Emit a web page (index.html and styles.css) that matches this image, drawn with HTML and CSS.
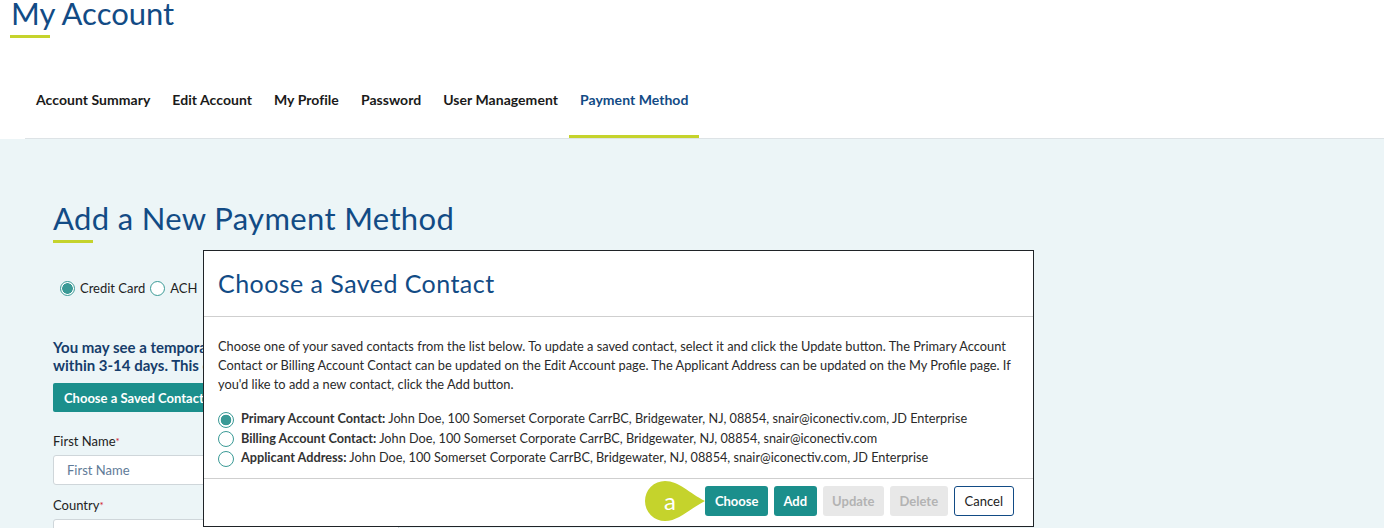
FILE: index.html
```html
<!DOCTYPE html>
<html lang="en">
<head>
  <meta charset="UTF-8">
  <title>My Account - Payment Method</title>
  <link rel="stylesheet" href="styles.css">
</head>
<body>
  <header class="top">
    <h1 class="page-title">My Account</h1>
    <nav class="tabs">
      <a class="tab" href="#">Account Summary</a>
      <a class="tab" href="#">Edit Account</a>
      <a class="tab" href="#">My Profile</a>
      <a class="tab" href="#">Password</a>
      <a class="tab" href="#">User Management</a>
      <a class="tab active" href="#">Payment Method</a>
    </nav>
  </header>

  <main class="content">
    <h2 class="section-title">Add a New Payment Method</h2>

    <div class="pay-type">
      <label class="opt"><span class="radio on"></span>Credit Card</label>
      <label class="opt"><span class="radio"></span>ACH</label>
    </div>

    <p class="notice">
      <span>You may see a temporary authorization charge on your card</span>
      <span>within 3-14 days. This charge will be removed</span>
    </p>

    <button class="btn btn-teal saved-btn">Choose a Saved Contact</button>

    <div class="field">
      <label class="field-label">First Name<span class="req">*</span></label>
      <input class="input" type="text" placeholder="First Name">
    </div>
    <div class="field">
      <label class="field-label">Country<span class="req">*</span></label>
      <input class="input" type="text">
    </div>
  </main>

  <div class="modal">
    <div class="modal-head">
      <h3 class="modal-title">Choose a Saved Contact</h3>
    </div>
    <div class="modal-body">
      <p class="modal-text">Choose one of your saved contacts from the list below. To update a saved contact, select it and click the Update button. The Primary Account Contact or Billing Account Contact can be updated on the Edit Account page. The Applicant Address can be updated on the My Profile page. If you'd like to add a new contact, click the Add button.</p>
      <ul class="contacts">
        <li><span class="radio big on"></span><span><b>Primary Account Contact:</b> John Doe, 100 Somerset Corporate CarrBC, Bridgewater, NJ, 08854, snair@iconectiv.com, JD Enterprise</span></li>
        <li><span class="radio big"></span><span><b>Billing Account Contact:</b> John Doe, 100 Somerset Corporate CarrBC, Bridgewater, NJ, 08854, snair@iconectiv.com</span></li>
        <li><span class="radio big"></span><span><b>Applicant Address:</b> John Doe, 100 Somerset Corporate CarrBC, Bridgewater, NJ, 08854, snair@iconectiv.com, JD Enterprise</span></li>
      </ul>
    </div>
    <div class="modal-foot">
      <span class="badge">
        <svg width="60" height="40" viewBox="0 0 60 40"><path d="M20 0 C34 0 44 12 60 20 C44 28 34 40 20 40 A20 20 0 0 1 20 0 Z" fill="#c5d32c"/></svg>
        <span class="badge-letter">a</span>
      </span>
      <button class="btn btn-teal">Choose</button>
      <button class="btn btn-teal">Add</button>
      <button class="btn btn-off">Update</button>
      <button class="btn btn-off">Delete</button>
      <button class="btn btn-line">Cancel</button>
    </div>
  </div>
</body>
</html>
```

FILE: styles.css
```css
body {
  margin: 0;
  font-family: Lato, "Open Sans", sans-serif;
  color: #222;
  height: 100vh;
  overflow: hidden;
  background: #ecf5f7;
}
.top {
  background: #fff;
}
.page-title {
  margin: 0;
  padding-left: 11px;
  font-size: 31px;
  font-weight: 400;
  line-height: 27px;
  color: #124b85;
}
.page-title::after {
  content: "";
  display: block;
  width: 40px;
  height: 3px;
  margin: 8px 0 0 -1px;
  background: #c5d32c;
}
.tabs {
  display: flex;
  margin: 24px 0 0 25px;
  border-bottom: 1px solid #dde3e6;
}
.tab {
  padding: 28px 11px 25px;
  border-bottom: 3px solid transparent;
  font-size: 14px;
  font-weight: 700;
  line-height: 20px;
  letter-spacing: 0.04px;
  color: #1a1a1a;
  text-decoration: none;
}
.tab.active {
  color: #124b85;
  border-bottom-color: #c5d32c;
}
.content {
  padding: 66px 0 0 53px;
}
.section-title {
  margin: 0;
  font-size: 31px;
  font-weight: 400;
  line-height: 27px;
  letter-spacing: 0.35px;
  color: #124b85;
}
.section-title::after {
  content: "";
  display: block;
  width: 40px;
  height: 3px;
  margin-top: 8px;
  background: #c5d32c;
}
.pay-type {
  display: flex;
  gap: 5px;
  margin: 36px 0 0 7px;
}
.opt {
  display: flex;
  align-items: center;
  gap: 5px;
  font-size: 13px;
  color: #222;
}
.radio {
  display: inline-block;
  flex: none;
  width: 13px;
  height: 13px;
  border: 1px solid #3a9a96;
  border-radius: 50%;
  background: #fff;
  margin-top: 2px;
}
.radio.on {
  background: radial-gradient(circle, #3a9a96 0 5px, #fff 5.6px);
}
.radio.big {
  width: 14px;
  height: 14px;
}
.notice {
  margin: 42px 0 0;
  font-size: 15px;
  font-weight: 700;
  line-height: 18px;
  color: #163d6b;
}
.notice span {
  display: block;
  white-space: nowrap;
}
.btn {
  font-family: Lato, "Open Sans", sans-serif;
  font-size: 13px;
  height: 30px;
  padding: 0 8.5px;
  border: 1px solid transparent;
  border-radius: 3px;
  cursor: pointer;
}
.btn-teal {
  background: #1b8f8c;
  color: #fff;
  font-weight: 700;
}
.btn-off {
  background: #e8e8e8;
  color: #b3b3b3;
  font-weight: 700;
}
.btn-line {
  padding: 0 10px;
  background: #fff;
  border-color: #124b85;
  color: #222;
}
.saved-btn {
  margin-top: 9px;
  height: 29px;
  padding: 0 10px;
  border-radius: 2px;
}
.field {
  margin-top: 21px;
}
.field + .field {
  margin-top: 12px;
}
.field-label {
  display: block;
  font-size: 13px;
  line-height: 16px;
  color: #222;
  margin-bottom: 6px;
}
.req {
  color: #d0142c;
  font-size: 10px;
  vertical-align: top;
}
.input {
  box-sizing: border-box;
  width: 346px;
  height: 30px;
  padding: 0 13px;
  border: 1px solid #cfd6da;
  border-radius: 3px;
  background: #fff;
  font-family: Lato, "Open Sans", sans-serif;
  font-size: 13px;
}
.input::placeholder {
  color: #5f7b98;
}
.modal {
  position: absolute;
  left: 203px;
  top: 250px;
  width: 829px;
  height: 275px;
  border: 1px solid #1f2327;
  background: #fff;
  display: flex;
  flex-direction: column;
}
.modal-head {
  box-sizing: border-box;
  height: 66px;
  border-bottom: 1px solid #cfcfcf;
  display: flex;
  align-items: center;
  padding: 0 0 2px 14px;
}
.modal-title {
  margin: 0;
  font-size: 25px;
  font-weight: 400;
  letter-spacing: 0.45px;
  color: #124b85;
}
.modal-body {
  padding: 20px 14px 0;
  height: 141px;
  border-bottom: 1px solid #cfcfcf;
}
.modal-text {
  margin: 0;
  font-size: 12.8px;
  line-height: 19px;
  color: #2a2a2a;
}
.contacts {
  list-style: none;
  margin: 15px 0 0;
  padding: 0;
}
.contacts li {
  display: flex;
  align-items: center;
  gap: 7px;
  font-size: 12.7px;
  line-height: 19.5px;
  color: #2a2a2a;
}
.contacts b {
  font-weight: 700;
  color: #333;
}
.modal-foot {
  position: relative;
  display: flex;
  justify-content: flex-end;
  align-items: flex-start;
  gap: 6px;
  padding: 7px 19px 0 0;
  flex: 1;
}
.badge {
  position: absolute;
  left: 441px;
  top: 2px;
  width: 60px;
  height: 40px;
}
.badge svg {
  display: block;
}
.badge-letter {
  position: absolute;
  left: 0;
  top: 0;
  width: 50px;
  line-height: 40px;
  text-align: center;
  color: #fff;
  font-size: 24px;
}
```
